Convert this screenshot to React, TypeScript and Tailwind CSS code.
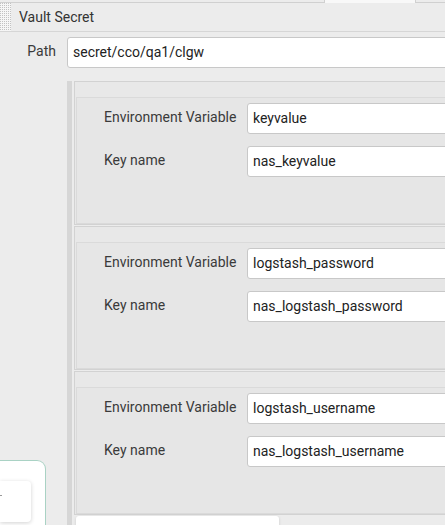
import React from "react";

const items = [
  { env: "keyvalue", key: "nas_keyvalue" },
  { env: "logstash_password", key: "nas_logstash_password" },
  { env: "logstash_username", key: "nas_logstash_username" },
];

function Field({ label, value }: { label: string; value: string }) {
  return (
    <div className="flex items-center">
      <div className="w-[143px] shrink-0 -mt-[3px] text-[14px] text-[#3a3a3a]">{label}</div>
      <div className="h-[31px] w-[240px] shrink-0 rounded-[3px] border border-[#c8c8c8] bg-white pl-[5px] text-[14px] leading-[29px] text-[#222]">
        {value}
      </div>
    </div>
  );
}

function Item({ env, k }: { env: string; k: string }) {
  return (
    <div className="border border-[#d2d2d2] bg-[#e8e8e8]">
      <div className="h-[15px]" />
      <div className="ml-[1px] flex flex-col gap-[12px] border-l border-t border-b border-[#dadada] bg-[#e6e6e6] pl-[27px] pt-[5px] pb-[46px]">
        <Field label="Environment Variable" value={env} />
        <Field label="Key name" value={k} />
      </div>
    </div>
  );
}

export default function App() {
  return (
    <div
      className="relative h-[525px] w-[445px] overflow-hidden bg-[#ececec]"
      style={{ fontFamily: "Roboto, 'Liberation Sans', sans-serif" }}
    >
      <div className="w-[480px]">
        {/* tab strip */}
        <div className="flex h-[3px]">
          <div className="w-[324px] border-b border-[#d0d0d0]" />
          <div className="w-[92px] border-x border-[#d0d0d0] bg-[#f8f8f8]" />
          <div className="flex-1 border-b border-[#d0d0d0]" />
        </div>
        {/* header */}
        <div className="flex h-[29px] items-center border-b border-[#d6d6d6]">
          <svg width="11" height="28" className="shrink-0">
            <defs>
              <pattern id="dots" width="2" height="2" patternUnits="userSpaceOnUse">
                <rect width="2" height="2" fill="#f6f6f6" />
                <rect width="1" height="1" fill="#c2c2c2" />
              </pattern>
            </defs>
            <rect width="11" height="28" fill="url(#dots)" />
          </svg>
          <span className="ml-[8px] text-[14px] text-[#333]">Vault Secret</span>
        </div>
        {/* path */}
        <div className="mt-[5px] flex items-center">
          <div className="w-[67px] shrink-0 pr-[11px] text-right text-[14px] text-[#3a3a3a] -mt-[2px]">Path</div>
          <div className="h-[31px] flex-1 rounded-[3px] border border-[#c8c8c8] bg-white pl-[5px] text-[14px] leading-[29px] text-[#222]">
            secret/cco/qa1/clgw
          </div>
        </div>
        {/* body */}
        <div className="mt-[13px] flex">
          <div className="w-[67px] shrink-0 pt-[379px]">
            <div className="relative h-[80px] w-[46px] rounded-tr-[9px] border border-l-0 border-[#a9d2c4] bg-white">
              <div className="absolute left-0 top-[20px] h-[41px] w-[31px] rounded-r-[4px] bg-white shadow-[0_1px_4px_rgba(0,0,0,0.18)]">
                <div className="absolute left-0 top-[14px] h-px w-[2px] bg-[#999]" />
              </div>
            </div>
          </div>
          <div className="flex flex-1 flex-col gap-[1px] border-l-[5px] border-[#d6d6d6] pl-[2px]">
            {items.map((it) => (
              <Item key={it.env} env={it.env} k={it.key} />
            ))}
            <div className="ml-[2px] h-[30px] w-[203px] rounded-[3px] bg-white shadow-[0_1px_3px_rgba(0,0,0,0.15)]" />
          </div>
        </div>
      </div>
    </div>
  );
}
